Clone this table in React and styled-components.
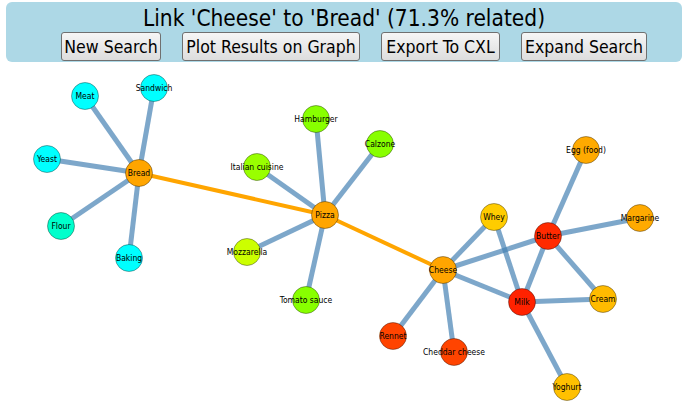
import React from 'react'
import styled, { createGlobalStyle } from 'styled-components'

const GlobalStyle = createGlobalStyle`
    html, body {
        margin: 0;
        padding: 0;
        background: #fff;
        font-family: "DejaVu Sans Condensed", "DejaVu Sans", sans-serif;
    }
`;

const Page = styled.div`
    width: 688px;
    height: 404px;
    overflow: hidden;
`;

const Header = styled.div`
    margin: 2px 6px 0 6px;
    height: 60px;
    box-sizing: border-box;
    background-color: #add8e6;
    border-radius: 6px;
    display: flex;
    flex-direction: column;
    align-items: center;
`;

const Title = styled.div`
    font-size: 22.5px;
    line-height: 28px;
    margin-top: 2px;
    color: #000;
`;

const Toolbar = styled.div`
    display: flex;
    gap: 21px;
    padding-left: 20px;
`;

const Button = styled.button`
    height: 29px;
    width: ${p => p.$w}px;
    padding: 0;
    font-family: inherit;
    font-size: 17.5px;
    color: #000;
    border: 1px solid #707070;
    border-radius: 3px;
    background: linear-gradient(#f6f6f6, #dddddd);
`;

const Graph = styled.svg`
    display: block;
`;

const nodes = {
    Bread: [139, 173, '#ffa500'],
    Meat: [85, 96, '#00ffff'],
    Sandwich: [154, 88, '#00ffff'],
    Yeast: [47, 159, '#00ffff'],
    Flour: [61, 226, '#00ffcc'],
    Baking: [129, 258, '#00ffff'],
    Pizza: [325, 215, '#ffa500'],
    Hamburger: [316, 119, '#88ff00'],
    Calzone: [380, 144, '#88ff00'],
    'Italian cuisine': [257, 167, '#99ff00'],
    Mozzarella: [247, 252, '#ccff00'],
    'Tomato sauce': [306, 300, '#88ff00'],
    Cheese: [443, 270, '#ffa500'],
    Whey: [494, 217, '#ffcc00'],
    Butter: [548, 236, '#ff2a00'],
    Milk: [522, 302, '#ff2200'],
    'Egg (food)': [586, 150, '#ffaa00'],
    Margarine: [640, 218, '#ffaa00'],
    Cream: [603, 299, '#ffbb00'],
    Rennet: [393, 336, '#ff4400'],
    'Cheddar cheese': [454, 352, '#ff4400'],
    Yoghurt: [567, 387, '#ffc000'],
};

const links = [
    ['Bread', 'Meat'], ['Bread', 'Sandwich'], ['Bread', 'Yeast'], ['Bread', 'Flour'], ['Bread', 'Baking'],
    ['Pizza', 'Hamburger'], ['Pizza', 'Calzone'], ['Pizza', 'Italian cuisine'], ['Pizza', 'Mozzarella'], ['Pizza', 'Tomato sauce'],
    ['Cheese', 'Whey'], ['Cheese', 'Butter'], ['Cheese', 'Milk'], ['Cheese', 'Rennet'], ['Cheese', 'Cheddar cheese'],
    ['Whey', 'Milk'],
    ['Butter', 'Egg (food)'], ['Butter', 'Margarine'], ['Butter', 'Milk'], ['Butter', 'Cream'],
    ['Milk', 'Cream'], ['Milk', 'Yoghurt'],
];

const path = [['Bread', 'Pizza'], ['Pizza', 'Cheese']];

export default function App() {
    return (
        <Page>
            <GlobalStyle />
            <Header>
                <Title>Link 'Cheese' to 'Bread' (71.3% related)</Title>
                <Toolbar>
                    <Button $w={100}>New Search</Button>
                    <Button $w={178}>Plot Results on Graph</Button>
                    <Button $w={119}>Export To CXL</Button>
                    <Button $w={126}>Expand Search</Button>
                </Toolbar>
            </Header>
            <Graph width="688" height="342" viewBox="0 62 688 342">
                <g stroke="steelblue" strokeOpacity="0.7" strokeWidth="5">
                    {links.map(([a, b]) => (
                        <line key={a + b} x1={nodes[a][0]} y1={nodes[a][1]} x2={nodes[b][0]} y2={nodes[b][1]} />
                    ))}
                </g>
                <g stroke="#ffa500" strokeWidth="4">
                    {path.map(([a, b]) => (
                        <line key={a + b} x1={nodes[a][0]} y1={nodes[a][1]} x2={nodes[b][0]} y2={nodes[b][1]} />
                    ))}
                </g>
                {Object.entries(nodes).map(([name, [x, y, fill]]) => (
                    <g key={name}>
                        <circle cx={x} cy={y} r="13.5" fill={fill} stroke="#000" strokeOpacity="0.35" strokeWidth="1" />
                        <text x={x} y={y + 3} textAnchor="middle" fontSize="8.5" fontFamily="DejaVu Sans Condensed, DejaVu Sans, sans-serif" fill="#000">{name}</text>
                    </g>
                ))}
            </Graph>
        </Page>
    )
}
